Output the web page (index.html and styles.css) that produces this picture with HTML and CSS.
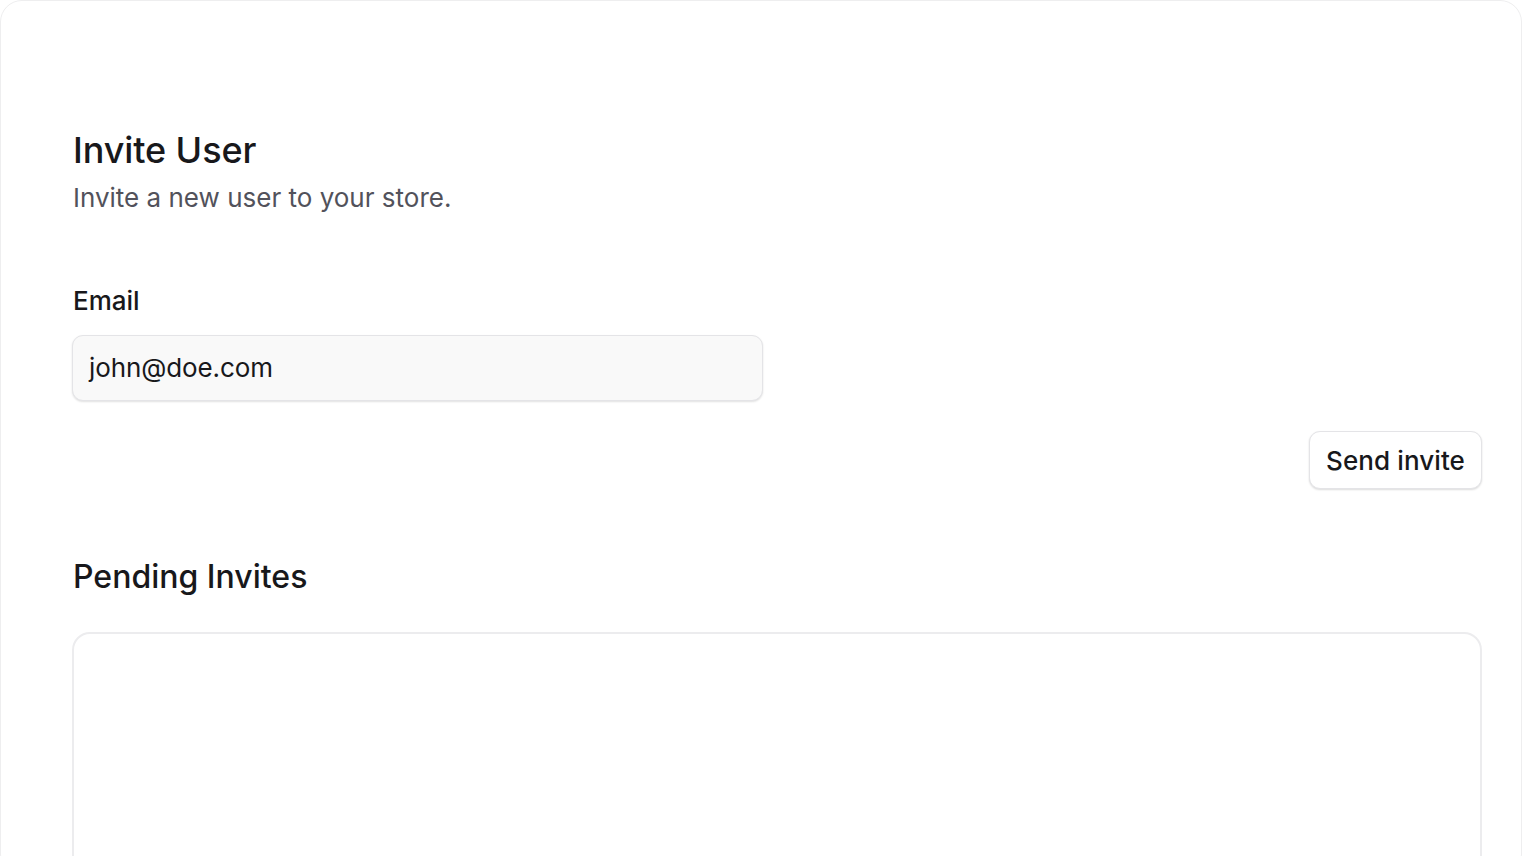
FILE: index.html
```html
<!DOCTYPE html>
<html>
<head>
<meta charset="utf-8">
<link rel="stylesheet" href="styles.css">
</head>
<body>
<div class="frame">
  <div class="content">
    <header class="head">
      <h1 class="title">Invite User</h1>
      <p class="subtitle">Invite a new user to your store.</p>
    </header>
    <div class="field">
      <label class="label">Email</label>
      <div class="input">john@doe.com</div>
    </div>
    <div class="actions">
      <button class="btn">Send invite</button>
    </div>
    <h2 class="section-title">Pending Invites</h2>
    <div class="table-box"></div>
  </div>
</div>
</body>
</html>
```
FILE: styles.css
```css
* { box-sizing: border-box; }
html, body { margin: 0; padding: 0; background: #fff; }
body { font-family: Inter, "Noto Sans", sans-serif; color: #18181b; overflow: hidden; }
.frame {
  width: 1522px;
  height: 876px;
  border: 1px solid #eeeeef;
  border-radius: 22px;
  overflow: hidden;
}
.content {
  padding: 125px 39px 0 72px;
  display: flex;
  flex-direction: column;
}
.title { margin: 0; font-size: 36px; font-weight: 500; line-height: 48px; letter-spacing: -0.1px; }
.subtitle { margin: 2px 0 0; font-size: 26px; line-height: 44px; color: #52525b; font-weight: 400; }
.field { margin-top: 61px; display: flex; flex-direction: column; width: 690px; }
.label { font-size: 26px; font-weight: 500; line-height: 40px; }
.input {
  margin-top: 14px;
  margin-left: -1px;
  height: 66px;
  border-radius: 11px;
  background: #f9f9f9;
  border: 1px solid #e4e4e7;
  box-shadow: 0 1px 2px rgba(0,0,0,0.12);
  font-size: 26px;
  line-height: 64px;
  padding-left: 16px;
  letter-spacing: -0.1px;
}
.actions { display: flex; justify-content: flex-end; margin-top: 30px; }
.btn {
  font-family: inherit;
  font-size: 26px;
  font-weight: 500;
  color: #18181b;
  background: #fff;
  border: 1px solid #e4e4e7;
  border-radius: 11px;
  box-shadow: 0 1px 2px rgba(0,0,0,0.14);
  height: 58px;
  padding: 0 16px;
  letter-spacing: 0.1px;
}
.section-title { margin: 70px 0 0; font-size: 32px; font-weight: 500; line-height: 36px; }
.table-box {
  margin-top: 37px;
  margin-left: -1px;
  height: 400px;
  border: 2px solid #ececee;
  border-radius: 18px;
}
```
